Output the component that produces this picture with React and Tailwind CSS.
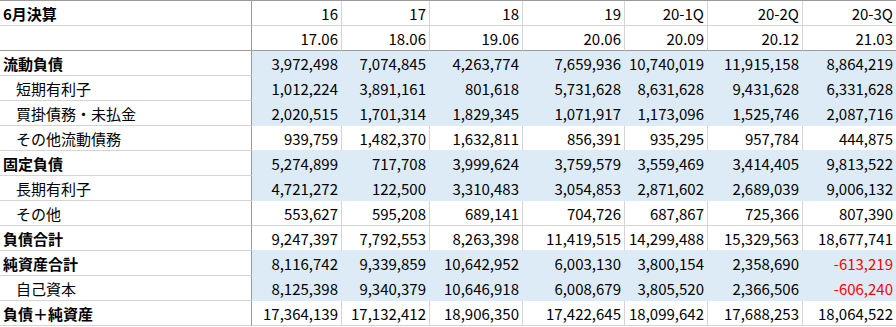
import React from 'react';

const COLS = 'grid grid-cols-[252px_90px_88px_93px_102px_83px_95px_93px]';

const headers = [
  { label: '6月決算', values: ['16', '17', '18', '19', '20-1Q', '20-2Q', '20-3Q'] },
  { label: '', values: ['17.06', '18.06', '19.06', '20.06', '20.09', '20.12', '21.03'] },
];

const rows = [
  { label: '流動負債', bold: true, blue: true, values: ['3,972,498', '7,074,845', '4,263,774', '7,659,936', '10,740,019', '11,915,158', '8,864,219'] },
  { label: '短期有利子', blue: true, values: ['1,012,224', '3,891,161', '801,618', '5,731,628', '8,631,628', '9,431,628', '6,331,628'] },
  { label: '買掛債務・未払金', blue: true, values: ['2,020,515', '1,701,314', '1,829,345', '1,071,917', '1,173,096', '1,525,746', '2,087,716'] },
  { label: 'その他流動債務', values: ['939,759', '1,482,370', '1,632,811', '856,391', '935,295', '957,784', '444,875'] },
  { label: '固定負債', bold: true, blue: true, values: ['5,274,899', '717,708', '3,999,624', '3,759,579', '3,559,469', '3,414,405', '9,813,522'] },
  { label: '長期有利子', blue: true, values: ['4,721,272', '122,500', '3,310,483', '3,054,853', '2,871,602', '2,689,039', '9,006,132'] },
  { label: 'その他', values: ['553,627', '595,208', '689,141', '704,726', '687,867', '725,366', '807,390'] },
  { label: '負債合計', bold: true, values: ['9,247,397', '7,792,553', '8,263,398', '11,419,515', '14,299,488', '15,329,563', '18,677,741'] },
  { label: '純資産合計', bold: true, blue: true, values: ['8,116,742', '9,339,859', '10,642,952', '6,003,130', '3,800,154', '2,358,690', '-613,219'] },
  { label: '自己資本', blue: true, values: ['8,125,398', '9,340,379', '10,646,918', '6,008,679', '3,805,520', '2,366,506', '-606,240'] },
  { label: '負債＋純資産', bold: true, values: ['17,364,139', '17,132,412', '18,906,350', '17,422,645', '18,099,642', '17,688,253', '18,064,522'] },
];

export default function App() {
  return (
    <div
      className="w-[896px] h-[327px] bg-white border-t border-[#9b9b9b] text-black text-[15px] leading-none overflow-hidden"
      style={{ fontFamily: '"Noto Sans CJK JP", "Noto Sans", sans-serif' }}
    >
      {/* header rows */}
      {headers.map((h, hi) => (
        <div key={hi} className={COLS}>
          <div
            className={`h-[25px] flex items-center pl-[3px] font-bold border-r border-r-[#9b9b9b] border-b ${
              hi === 1 ? 'border-b-[#9b9b9b]' : 'border-b-[#d4d4d4]'
            }`}
          >
            {h.label}
          </div>
          {h.values.map((v, i) => (
            <div
              key={i}
              className={`h-[25px] flex items-center justify-end pr-[3px] border-b ${
                i < 6 ? 'border-r border-r-[#d4d4d4]' : ''
              } ${hi === 1 ? 'border-b-[#9b9b9b]' : 'border-b-[#d4d4d4]'}`}
            >
              {v}
            </div>
          ))}
        </div>
      ))}

      {/* body rows */}
      {rows.map((r, ri) => {
        const next = rows[ri + 1];
        const nextBlue = next ? next.blue : false;
        return (
          <div key={ri} className={COLS}>
            <div
              className={`h-[25px] flex items-center border-r border-r-[#9b9b9b] border-b border-b-[#d4d4d4] ${
                r.bold ? 'font-bold pl-[3px]' : 'pl-[16px]'
              }`}
            >
              {r.label}
            </div>
            {r.values.map((v, i) => {
              const neg = v.startsWith('-');
              let cls = 'h-[25px] flex items-center justify-end pr-[3px] border-b';
              if (r.blue) {
                cls += ' bg-[#ddebf7] border-b-[#ddebf7]';
                if (i < 6) cls += ' border-r border-r-[#ddebf7]';
              } else {
                cls += nextBlue ? ' border-b-[#ddebf7]' : ' border-b-[#d4d4d4]';
                if (i < 6) cls += ' border-r border-r-[#d4d4d4]';
              }
              return (
                <div key={i} className={`${cls} ${neg ? 'text-[#ff0000]' : ''}`}>
                  {v}
                </div>
              );
            })}
          </div>
        );
      })}
    </div>
  );
}
